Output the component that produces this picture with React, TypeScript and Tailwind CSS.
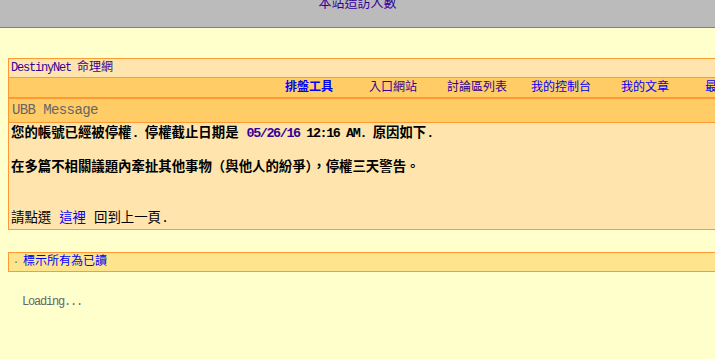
import React from 'react';

// latin runs use a half-width mono look, like the old MingLiU pages
function L({ children, size = 13 }: { children: React.ReactNode; size?: 12 | 13 }) {
  return (
    <span className={size === 13 ? 'tracking-[-1.4px]' : 'tracking-[-1.2px]'}>
      {children}
    </span>
  );
}

const navItems = [
  { label: '排盤工具', color: 'text-[#0000ff] font-bold' },
  { label: '入口網站', color: 'text-[#330099]' },
  { label: '討論區列表', color: 'text-[#330099]' },
  { label: '我的控制台', color: 'text-[#0000ff]' },
  { label: '我的文章', color: 'text-[#0000ff]' },
  { label: '最新文章', color: 'text-[#0000ff]' },
  { label: '搜尋', color: 'text-[#0000ff]' },
];

export default function App() {
  return (
    <div className="h-[359px] w-[715px] overflow-hidden bg-[#ffffcc] font-['Liberation_Mono','Noto_Sans_CJK_TC',monospace]">
      {/* visitor counter bar, scrolled half out of view */}
      <div className="h-[28px] overflow-hidden border-b border-[#808080] bg-[#bbbbbb] text-center text-[13px] leading-[13px] text-[#330099]">
        <div className="-mt-[3px]">本站造訪人數</div>
      </div>

      {/* UBB message table */}
      <div className="ml-[8px] mt-[30px] w-[960px] border border-[#ff9933]">
        <div className="flex h-[19px] items-center border-b border-[#ff9933] bg-[#ffe5ad] pl-[2px] text-[12px] text-[#330099]">
          <L size={12}>DestinyNet&nbsp;</L>命理網
        </div>
        <div className="flex h-[21px] items-center border-b-2 border-[#ff9933] bg-[#ffcc66] pl-[258px] text-[12px]">
          {navItems.map(item => (
            <div key={item.label} className={`w-[84px] shrink-0 text-center ${item.color}`}>
              {item.label}
            </div>
          ))}
        </div>
        <div className="flex h-[24px] items-center border-b border-[#ff9933] bg-[#ffcc66] pl-[3px] font-['Liberation_Mono',monospace] text-[14px] text-[#666666]">
          <span className="tracking-[-0.6px]">UBB Message</span>
        </div>
        <div className="h-[106px] bg-[#ffe5ad] px-[2px] py-[2px] text-[13.4px] leading-[17px] text-black">
          <div className="font-bold">
            您的帳號已經被停權<L>. </L>停權截止日期是 <span className="text-[#330099]"><L>05/26/16</L></span>
            <L> 12:16 AM. </L>原因如下<L>.</L>
          </div>
          <div className="h-[17px]" />
          <div className="font-bold">在多篇不相關議題內牽扯其他事物（與他人的紛爭），停權三天警告。</div>
          <div className="h-[34px]" />
          <div>
            請點選 <span className="text-[#0000ff]">這裡</span> 回到上一頁<L>.</L>
          </div>
        </div>
      </div>

      {/* mark all read */}
      <div className="ml-[8px] mt-[22px] flex h-[20px] w-[960px] items-center border border-[#ff9933] bg-[#ffe48e] text-[12px]">
        <span className="ml-[4px] w-[10px] text-[10px] text-[#666666]">·</span>
        <span className="text-[#0000ff]">標示所有為已讀</span>
      </div>

      <div className="ml-[22px] mt-[21px] text-[12px] text-[#666666]">
        <L size={12}>Loading...</L>
      </div>
    </div>
  );
}
